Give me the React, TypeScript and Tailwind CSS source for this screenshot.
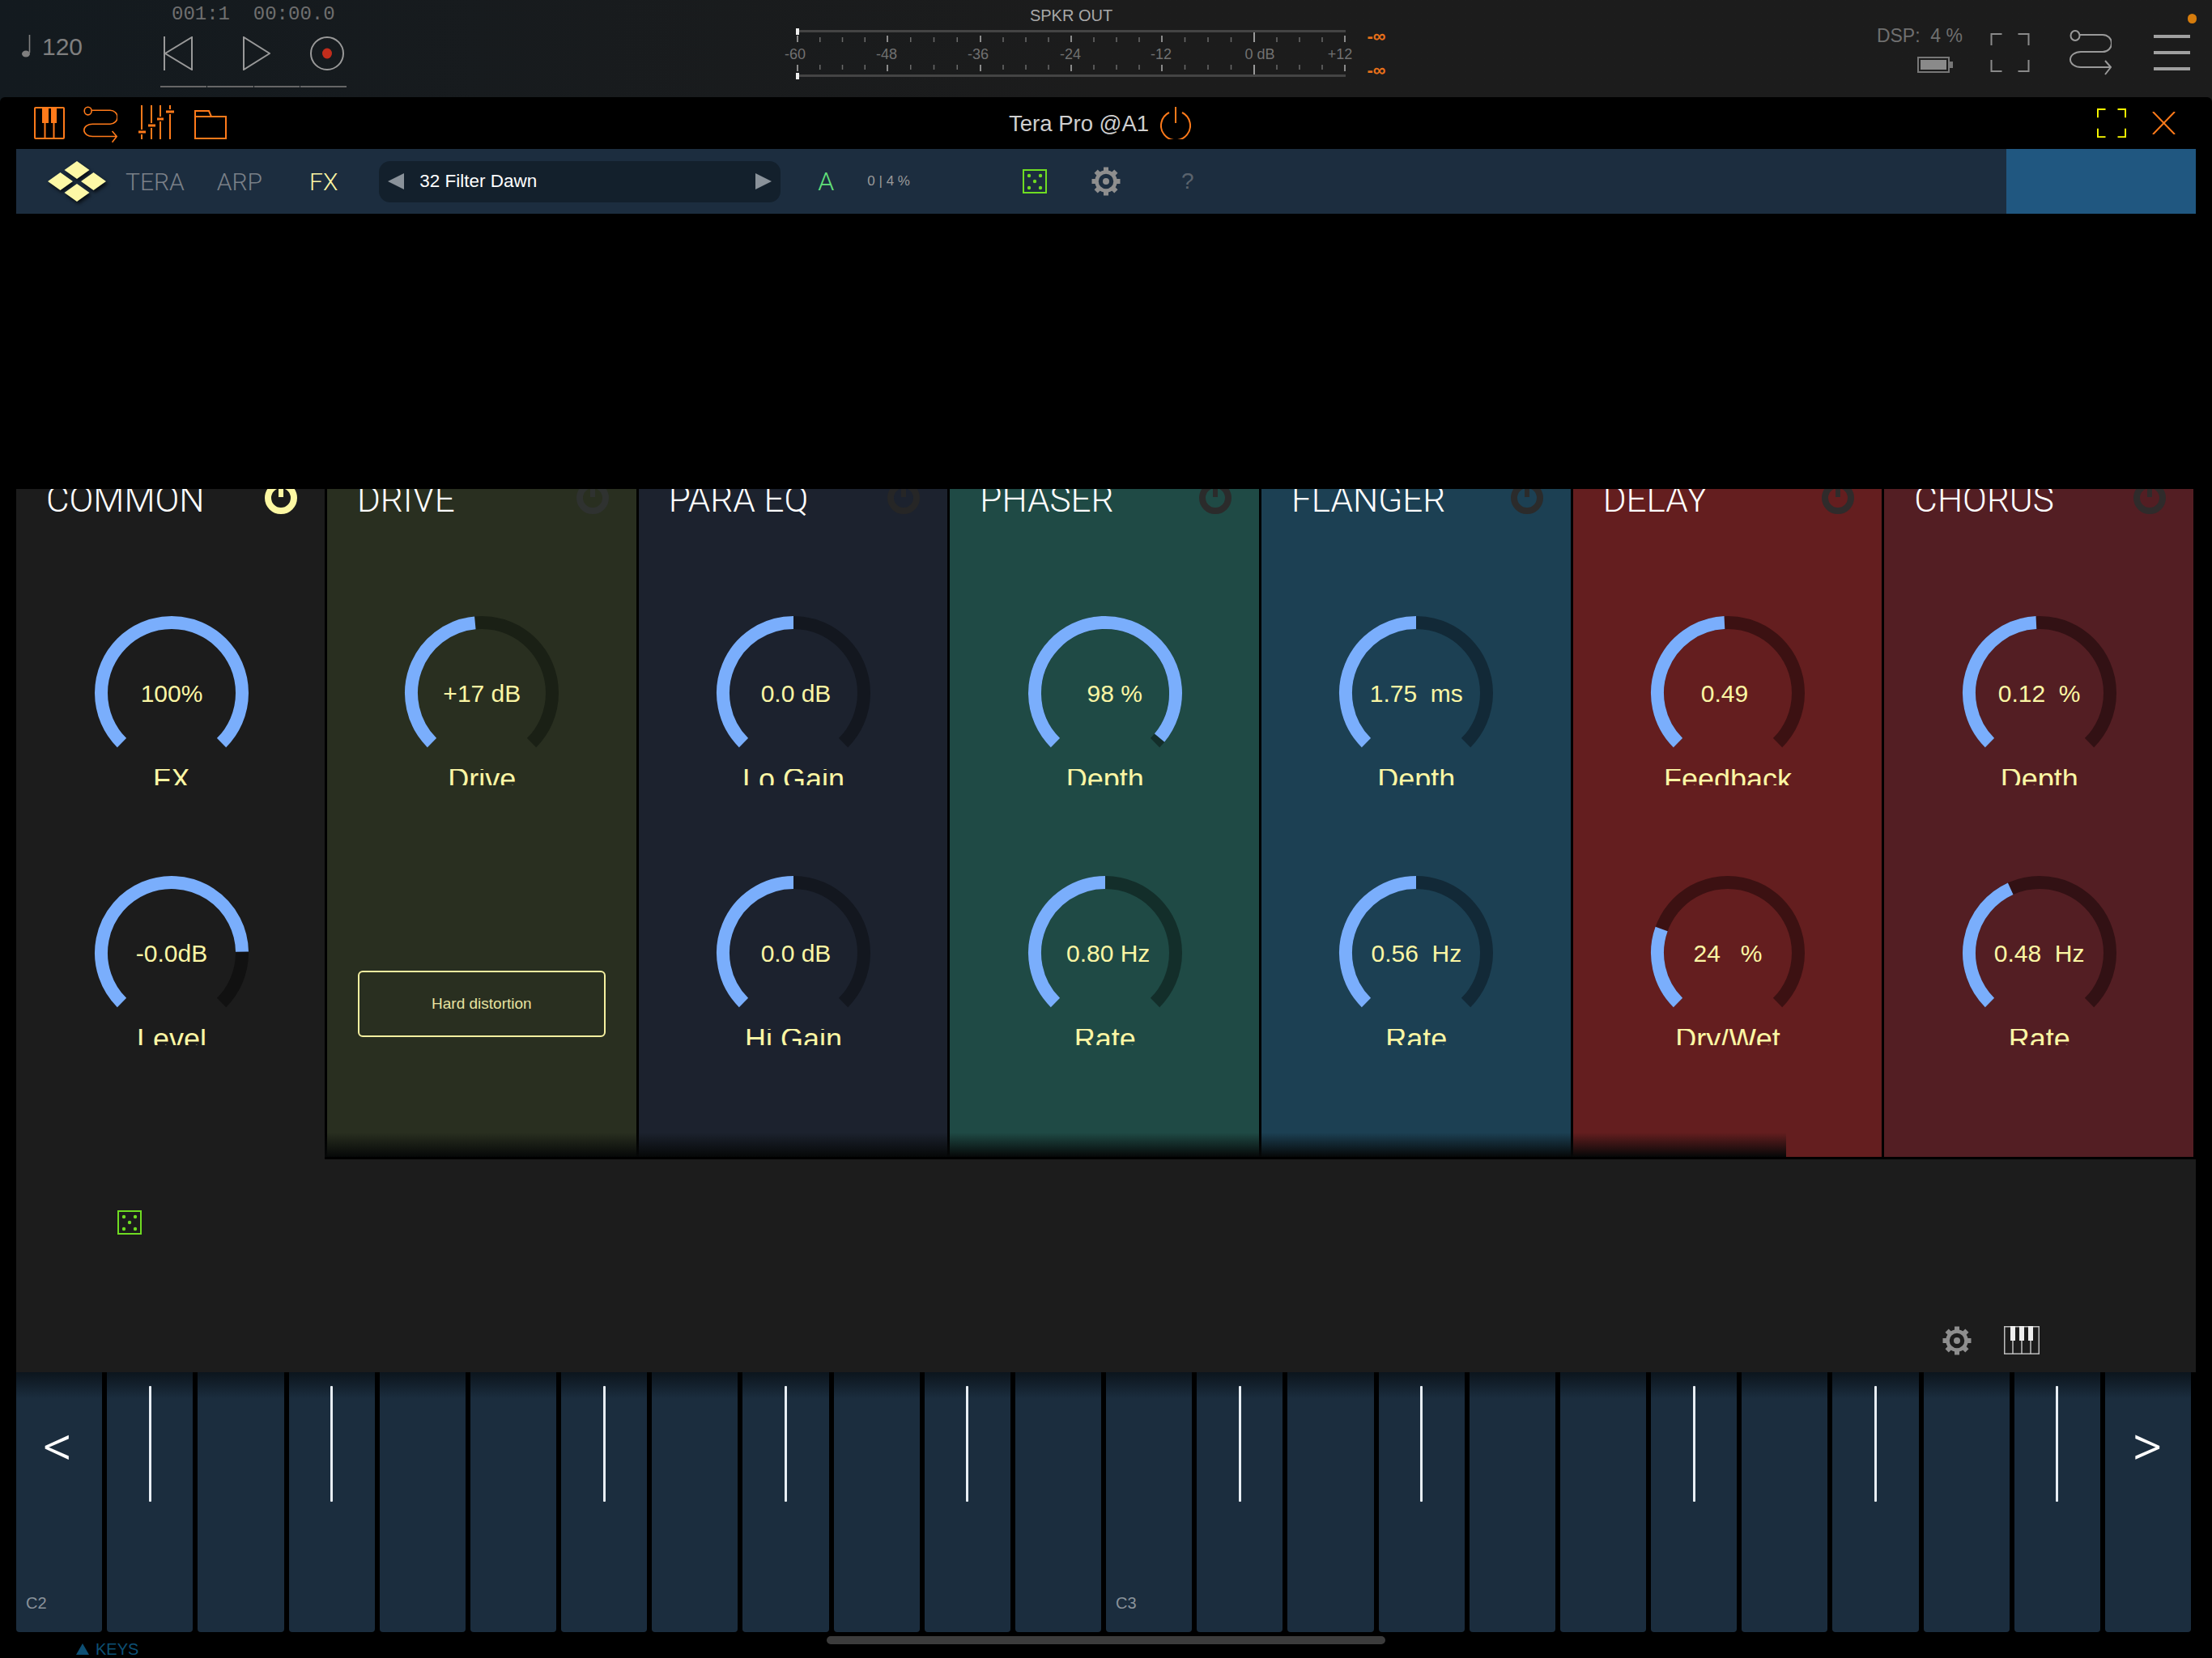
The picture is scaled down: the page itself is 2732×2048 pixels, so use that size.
import React from "react";

type Knob = { value: string; label: string; frac: number; shift?: string };
type Panel = { title: string; bg: string; track: string; power: string; knobs: Knob[] };

const panels: Panel[] = [
    {
        title: "DRIVE",
        bg: "bg-[#292f20]",
        track: "#1a2015",
        power: "#2f3230",
        knobs: [{ value: "+17 dB", label: "Drive", frac: 0.48 }],
    },
    {
        title: "PARA EQ",
        bg: "bg-[#1c222e]",
        track: "#13171f",
        power: "#262626",
        knobs: [
            { value: "0.0 dB", label: "Lo Gain", frac: 0.5, shift: "pl-[6px]" },
            { value: "0.0 dB", label: "Hi Gain", frac: 0.5, shift: "pl-[6px]" },
        ],
    },
    {
        title: "PHASER",
        bg: "bg-[#1f4a45]",
        track: "#132e2a",
        power: "#2b2b2b",
        knobs: [
            { value: "98 %", label: "Depth", frac: 0.98, shift: "pl-[24px]" },
            { value: "0.80 Hz", label: "Rate", frac: 0.5, shift: "pl-[8px]" },
        ],
    },
    {
        title: "FLANGER",
        bg: "bg-[#1c4053]",
        track: "#122937",
        power: "#2b2b2b",
        knobs: [
            { value: "1.75  ms", label: "Depth", frac: 0.5 },
            { value: "0.56  Hz", label: "Rate", frac: 0.5 },
        ],
    },
    {
        title: "DELAY",
        bg: "bg-[#641e1f]",
        track: "#3c1112",
        power: "#2f2b2b",
        knobs: [
            { value: "0.49", label: "Feedback", frac: 0.49, shift: "pr-[8px]" },
            { value: "24   %", label: "Dry/Wet", frac: 0.24 },
        ],
    },
    {
        title: "CHORUS",
        bg: "bg-[#531e23]",
        track: "#321114",
        power: "#2f2b2b",
        knobs: [
            { value: "0.12  %", label: "Depth", frac: 0.49 },
            { value: "0.48  Hz", label: "Rate", frac: 0.41 },
        ],
    },
];

const blackKeyLines = [1, 3, 6, 8, 10, 13, 15, 18, 20, 22];

const point = (deg: number, r: number) => {
    const rad = (deg * Math.PI) / 180;
    return `${96 + r * Math.sin(rad)} ${96 - r * Math.cos(rad)}`;
};

const arc = (from: number, to: number, r: number) =>
    `M${point(from, r)} A${r} ${r} 0 ${to - from > 180 ? 1 : 0} 1 ${point(to, r)}`;

const Dice = ({ className }: { className: string }) => (
    <svg viewBox="0 0 30 30" className={className}>
        <rect x="1" y="1" width="28" height="28" fill="none" stroke="#6fdc22" strokeWidth="2" />
        {[[8, 8], [22, 8], [15, 15], [8, 23], [22, 23]].map(([x, y]) => (
            <circle key={`${x}-${y}`} cx={x} cy={y} r="2.2" fill="#6fdc22" />
        ))}
    </svg>
);

const Gear = ({ className }: { className: string }) => (
    <svg viewBox="0 0 36 36" className={className}>
        {[0, 45, 90, 135, 180, 225, 270, 315].map((a) => (
            <rect key={a} x="15" y="0.5" width="6" height="6" fill="#8e8e8e" transform={`rotate(${a} 18 18)`} />
        ))}
        <circle cx="18" cy="18" r="11.5" fill="none" stroke="#8e8e8e" strokeWidth="4.5" />
        <circle cx="18" cy="18" r="4" fill="#8e8e8e" />
    </svg>
);

const Brackets = ({ className, color, width }: { className: string; color: string; width: number }) => (
    <svg viewBox="0 0 48 48" className={className} fill="none" stroke={color} strokeWidth={width}>
        <path d="M1 15V1H14M34 1H47V15M1 33V47H14M34 47H47V33" />
    </svg>
);

const RouteIcon = ({ className, color }: { className: string; color: string }) => (
    <svg viewBox="0 0 52 56" className={className} fill="none" stroke={color} strokeWidth="2">
        <ellipse cx="7" cy="7" rx="5.5" ry="6" />
        <path d="M13 6H41A11 10.5 0 0 1 41 27H14A13 9.5 0 0 0 14 46H51M44 38L51 46L44 55" />
    </svg>
);

const PowerIcon = ({ color }: { color: string }) => (
    <svg viewBox="0 0 40 44" className="w-[40px] h-[44px] shrink-0" fill="none" stroke={color}>
        <ellipse cx="20" cy="24" rx="16" ry="16" strokeWidth="8" />
        <path d="M20 6V23" strokeWidth="6" />
    </svg>
);

const KnobDial = ({ knob, track }: { knob: Knob; track: string }) => {
    const end = -135 + 270 * knob.frac;
    return (
        <div className="w-full flex flex-col items-center">
            <div className="relative w-[192px] h-[192px]">
                <svg viewBox="0 0 192 192" className="w-[192px] h-[192px]" fill="none" strokeWidth="16">
                    <path d={arc(-135, 135, 87)} stroke={track} />
                    <path d={arc(-135, end, 87)} stroke="#7aaefc" />
                </svg>
                <div
                    className={`absolute inset-0 flex items-center justify-center text-[30px] text-[#fbf6a4] whitespace-pre ${knob.shift ?? ""}`}
                >
                    {knob.value}
                </div>
            </div>
            <div className="h-[20px] overflow-hidden mt-[-2px]">
                <div className="text-[36px] leading-[36px] mt-[-5px] text-[#fbf6a4]">{knob.label}</div>
            </div>
        </div>
    );
};

const PanelHead = ({ title, color }: { title: string; color: string }) => (
    <div className="h-[40px] overflow-hidden flex justify-between pl-[37px] pr-[34px]">
        <div className="font-[Roboto] font-light text-[44px] leading-[44px] mt-[-9px] text-white">{title}</div>
        <div className="mt-[-13px]">
            <PowerIcon color={color} />
        </div>
    </div>
);

const Meter = () => {
    const major = [985, 1096, 1211, 1323, 1435, 1549, 1661];
    const labels: [string, number][] = [
        ["-60", 982],
        ["-48", 1095],
        ["-36", 1208],
        ["-24", 1322],
        ["-12", 1434],
        ["0 dB", 1556],
        ["+12", 1655],
    ];
    const minor: number[] = [];
    major.slice(0, -1).forEach((m, i) => {
        const step = (major[i + 1] - m) / 4;
        [1, 2, 3].forEach((k) => minor.push(m + step * k));
    });
    return (
        <svg viewBox="960 0 770 100" className="w-[770px] h-[100px] shrink-0">
            <text x="1323" y="26" textAnchor="middle" fontSize="20" fill="#a8a8a8">SPKR OUT</text>
            <rect x="985" y="37" width="677" height="3" fill="#444" />
            <rect x="985" y="92" width="677" height="3" fill="#444" />
            <rect x="983" y="35" width="4" height="8" fill="#eee" />
            <rect x="983" y="90" width="4" height="8" fill="#eee" />
            {major.map((x) => (
                <g key={x} fill={x === 1549 ? "#999" : "#8a8a8a"}>
                    <rect x={x - 1} y={x === 1549 ? 40 : 44} width="2" height={x === 1549 ? 12 : 8} />
                    <rect x={x - 1} y="80" width="2" height={x === 1549 ? 12 : 8} />
                </g>
            ))}
            {minor.map((x) => (
                <g key={x} fill="#6a6a6a">
                    <rect x={x - 0.75} y="46" width="1.5" height="6" />
                    <rect x={x - 0.75} y="80" width="1.5" height="6" />
                </g>
            ))}
            {labels.map(([t, x]) => (
                <text key={t} x={x} y="73" textAnchor="middle" fontSize="18" fill="#717171">{t}</text>
            ))}
            <text x="1700" y="52" textAnchor="middle" fontSize="22" fontWeight="700" fill="#e8701a">-∞</text>
            <text x="1700" y="94" textAnchor="middle" fontSize="22" fontWeight="700" fill="#e8701a">-∞</text>
        </svg>
    );
};

const TopBar = () => (
    <div className="relative h-[120px] flex pl-[26px] pr-[27px] shrink-0">
        <div className="w-[172px] flex items-center gap-[14px] h-[120px] pb-[6px]">
            <svg viewBox="0 0 12 28" className="w-[12px] h-[28px]">
                <path d="M10.5 0V22" stroke="#7f7f7f" strokeWidth="1.6" />
                <ellipse cx="6" cy="23.5" rx="5" ry="4" fill="#7f7f7f" />
            </svg>
            <span className="text-[30px] text-[#7f7f7f]">120</span>
        </div>
        <div className="w-[230px]">
            <div className="font-['Liberation_Mono'] text-[24px] leading-[24px] mt-[6px] pl-[14px] text-[#6f6f6f] whitespace-pre">
                001:1  00:00.0
            </div>
            <div className="flex mt-[15px] pl-[4px] h-[42px]">
                <svg viewBox="0 0 36 42" className="w-[36px] h-[42px]" fill="none" stroke="#999" strokeWidth="2">
                    <path d="M1 0V42M35 1V41L2 21Z" />
                </svg>
                <svg viewBox="0 0 34 42" className="w-[34px] h-[42px] ml-[62px]" fill="none" stroke="#999" strokeWidth="2">
                    <path d="M1 1V41L33 21Z" />
                </svg>
                <svg viewBox="0 0 42 42" className="w-[42px] h-[42px] ml-[49px]">
                    <circle cx="21" cy="21" r="20" fill="none" stroke="#999" strokeWidth="2" />
                    <ellipse cx="21" cy="21" rx="6" ry="6.5" fill="#c22d1c" />
                </svg>
            </div>
            <div className="flex gap-[1px] mt-[19px]">
                <div className="h-[2px] flex-1 bg-[#666]" />
                <div className="h-[2px] flex-1 bg-[#666]" />
                <div className="h-[2px] flex-1 bg-[#666]" />
                <div className="h-[2px] flex-1 bg-[#666]" />
            </div>
        </div>
        <div className="ml-[532px]">
            <Meter />
        </div>
        <div className="ml-auto flex">
            <div className="w-[104px] flex flex-col items-end">
                <div className="text-[23px] leading-[24px] mt-[32px] text-[#6f6f6f] whitespace-pre">DSP:  4 %</div>
                <svg viewBox="0 0 44 20" className="w-[44px] h-[20px] mt-[14px] mr-[12px]">
                    <rect x="1" y="1" width="38" height="18" fill="none" stroke="#777" strokeWidth="2" />
                    <rect x="4" y="4" width="32" height="12" fill="#8a8a8a" />
                    <rect x="39" y="6" width="5" height="8" fill="#777" />
                </svg>
            </div>
            <Brackets className="w-[49px] h-[48px] ml-[34px] mt-[41px]" color="#8a8a8a" width={2} />
            <RouteIcon className="w-[52px] h-[56px] ml-[49px] mt-[37px]" color="#999" />
            <div className="w-[45px] ml-[52px] mt-[43px] flex flex-col gap-[16px]">
                <div className="h-[4px] bg-[#a0a0a0]" />
                <div className="h-[4px] bg-[#a0a0a0]" />
                <div className="h-[4px] bg-[#a0a0a0]" />
            </div>
        </div>
        <div className="absolute left-[2702px] top-[17px] w-[11px] h-[12px] rounded-full bg-[#d67c0c]" />
    </div>
);

const ToolBar = () => (
    <div className="h-[64px] flex pl-[42px] pr-[45px] items-start shrink-0">
        <svg viewBox="0 0 38 40" className="w-[38px] h-[40px] mt-[12px]" fill="none" stroke="#ff7a1a" strokeWidth="2">
            <rect x="1" y="1" width="36" height="38" rx="1" />
            <path d="M13.5 20V39M24.5 20V39" />
            <rect x="10" y="1" width="8" height="19" fill="#ff7a1a" stroke="none" />
            <rect x="21" y="1" width="7" height="19" fill="#ff7a1a" stroke="none" />
        </svg>
        <RouteIcon className="w-[42px] h-[48px] ml-[23px] mt-[10px]" color="#ff7a1a" />
        <svg viewBox="0 0 44 44" className="w-[44px] h-[44px] ml-[26px] mt-[10px]" fill="none" stroke="#ff7a1a" strokeWidth="2">
            <path d="M4 0V30M4 36V42M16 0V22M16 28V42M27 0V14M27 20V42M39 0V5M39 11V42" />
            <path d="M0 33H9M12 25H21M23 17H31M34 8H44" strokeWidth="3" />
        </svg>
        <svg viewBox="0 0 40 36" className="w-[40px] h-[36px] ml-[25px] mt-[16px]" fill="none" stroke="#ff7a1a" strokeWidth="2">
            <path d="M1 35V1H18L21 8H39V35ZM1 8H21" />
        </svg>
        <div className="ml-[966px] mt-[18px] text-[27.5px] leading-[30px] text-[#cfcfcf]">Tera Pro @A1</div>
        <svg viewBox="0 0 38 40" className="w-[38px] h-[40px] ml-[14px] mt-[12px]" fill="none" stroke="#ff7a1a" strokeWidth="2">
            <path d="M11 7A18 18 0 1 0 27 7M19 0V20" />
        </svg>
        <Brackets className="w-[36px] h-[36px] ml-auto mt-[14px]" color="#ffff00" width={3} />
        <svg viewBox="0 0 29 28" className="w-[29px] h-[28px] ml-[32px] mt-[18px]" fill="none" stroke="#ff7a1a" strokeWidth="2">
            <path d="M1 0L28 28M28 0L1 28" />
        </svg>
    </div>
);

const PluginBar = () => (
    <div className="h-[80px] mx-[20px] w-[2692px] bg-[#1c2d3f] flex items-center shrink-0">
        <svg viewBox="0 0 72 50" className="w-[72px] h-[50px] ml-[39px] drop-shadow-[2px_3px_2px_rgba(0,0,0,0.7)]" fill="#fdf8a6">
            <path d="M36 0L51.5 11L36 22L20.5 11ZM15.5 14L31 25L15.5 36L0 25ZM56.5 14L72 25L56.5 36L41 25ZM36 28L51.5 39L36 50L20.5 39Z" />
        </svg>
        <span className="ml-[24px] text-[30px] text-[#7a8088] font-[Roboto] font-light">TERA</span>
        <span className="ml-[40px] text-[30px] text-[#7a8088] font-[Roboto] font-light">ARP</span>
        <span className="ml-[58px] text-[30px] text-[#fbf6a4] font-[Roboto] font-light">FX</span>
        <div className="ml-[51px] w-[496px] h-[51px] rounded-[14px] bg-[#13202c] flex items-center pl-[11px] pr-[11px]">
            <svg viewBox="0 0 20 20" className="w-[20px] h-[20px]"><path d="M20 0V20L0 10Z" fill="#8a929a" /></svg>
            <span className="ml-[19px] text-[22.5px] text-white">32 Filter Dawn</span>
            <svg viewBox="0 0 20 20" className="w-[20px] h-[20px] ml-auto"><path d="M0 0V20L20 10Z" fill="#8a929a" /></svg>
        </div>
        <span className="ml-[46px] text-[32px] text-[#62e07a] font-[Roboto] font-light">A</span>
        <span className="ml-[41px] text-[17px] text-[#9a9a9a]">0 | 4 %</span>
        <Dice className="w-[30px] h-[30px] ml-[139px]" />
        <Gear className="w-[36px] h-[36px] ml-[55px]" />
        <span className="ml-[75px] text-[28px] text-[#5a636d]">?</span>
        <div className="ml-auto w-[234px] h-[80px] bg-[#205780]" />
    </div>
);

const FxRack = () => (
    <div className="h-[828px] flex">
        <div className="w-[381px] shrink-0">
            <PanelHead title="COMMON" color="#fdf8a3" />
            <div className="mt-[116px] pl-[3px]">
                <KnobDial knob={{ value: "100%", label: "FX", frac: 1 }} track="#111" />
            </div>
            <div className="mt-[111px] pl-[3px]">
                <KnobDial knob={{ value: "-0.0dB", label: "Level", frac: 0.83 }} track="#111" />
            </div>
        </div>
        <div className="relative flex-1 bg-black flex gap-[3px] pl-[3px] pr-[3px] pb-[3px]">
            {panels.map((panel) => (
                <div key={panel.title} className={`flex-1 min-w-0 ${panel.bg}`}>
                    <PanelHead title={panel.title} color={panel.power} />
                    <div className="mt-[116px] pl-[1px]">
                        <KnobDial knob={panel.knobs[0]} track={panel.track} />
                    </div>
                    {panel.knobs[1] ? (
                        <div className="mt-[111px] pl-[1px]">
                            <KnobDial knob={panel.knobs[1]} track={panel.track} />
                        </div>
                    ) : (
                        <div className="mt-[229px] mx-[38px] h-[82px] border-2 border-[#f5f0a0] rounded-[6px] flex items-center justify-center text-[19px] text-[#e8e3a0]">
                            Hard distortion
                        </div>
                    )}
                </div>
            ))}
            <div className="absolute left-0 bottom-[3px] w-[1805px] h-[30px] bg-gradient-to-b from-transparent to-[#060808]" />
        </div>
    </div>
);

const Keyboard = () => (
    <div className="w-[2686px] ml-[20px] h-[321px] flex gap-[6px] shrink-0">
        {Array.from({ length: 24 }).map((_, i) => (
            <div
                key={i}
                className="relative flex-1 rounded-b-[4px] bg-gradient-to-b from-[#0c151d] from-0% to-[#1b2d3e] to-[10%] flex justify-center"
            >
                {blackKeyLines.includes(i) && <div className="w-[3px] h-[143px] mt-[17px] rounded-[1px] bg-[#e8eef4]" />}
                {i === 0 && <span className="absolute left-[33px] top-[52px] font-[Roboto] font-light text-[72px] leading-[80px] text-white">&lt;</span>}
                {i === 23 && <span className="absolute left-[33px] top-[52px] font-[Roboto] font-light text-[72px] leading-[80px] text-white">&gt;</span>}
                {i === 0 && <span className="absolute left-[12px] bottom-[24px] text-[20px] leading-[24px] text-[#8a939b]">C2</span>}
                {i === 12 && <span className="absolute left-[12px] bottom-[24px] text-[20px] leading-[24px] text-[#8a939b]">C3</span>}
            </div>
        ))}
    </div>
);

export default function App() {
    return (
        <div className="relative w-[2732px] h-[2048px] overflow-hidden bg-gradient-to-r from-[#131a1f] to-[#1c1c1c] to-50% font-['Liberation_Sans',sans-serif]">
            <TopBar />
            <div className="bg-black rounded-t-[6px] h-[1928px] flex flex-col">
                <ToolBar />
                <PluginBar />
                <div className="h-[340px] shrink-0" />
                <div className="w-[2692px] ml-[20px] h-[1091px] bg-[#1c1c1c] shrink-0">
                    <FxRack />
                    <div className="flex justify-between">
                        <Dice className="w-[30px] h-[30px] ml-[125px] mt-[63px]" />
                        <div className="flex mr-[193px] mt-[206px] gap-[40px]">
                            <Gear className="w-[36px] h-[36px]" />
                            <svg viewBox="0 0 44 35" className="w-[44px] h-[35px]" fill="none" stroke="#bdbdbd" strokeWidth="1.5">
                                <rect x="0.75" y="0.75" width="42.5" height="33.5" />
                                <path d="M11 17V35M22 17V35M33 17V35" />
                                <rect x="8" y="0" width="6" height="18" fill="#eee" stroke="none" />
                                <rect x="19" y="0" width="6" height="18" fill="#eee" stroke="none" />
                                <rect x="30" y="0" width="6" height="18" fill="#eee" stroke="none" />
                            </svg>
                        </div>
                    </div>
                </div>
                <Keyboard />
                <div className="flex items-center pl-[94px] pt-[11px] gap-[8px]">
                    <svg viewBox="0 0 16 14" className="w-[16px] h-[14px]"><path d="M8 0L16 14H0Z" fill="#0d4f74" /></svg>
                    <span className="text-[20px] leading-[20px] text-[#0d4f74]">KEYS</span>
                </div>
            </div>
            <div className="absolute left-[1021px] top-[2021px] w-[690px] h-[10px] rounded-full bg-[#3c3c3c]" />
        </div>
    );
}
